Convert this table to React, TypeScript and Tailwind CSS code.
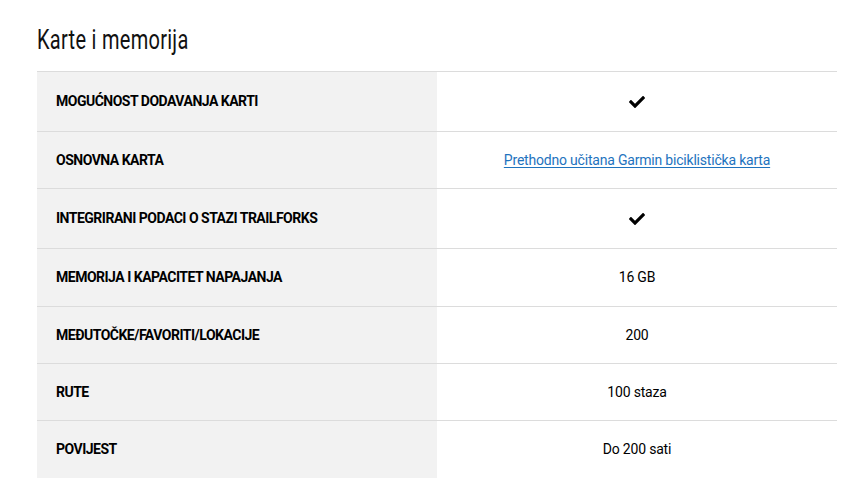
import { FaCheck } from 'react-icons/fa'

const rows: { label: string; value: string; kind?: 'check' | 'link'; h: string }[] = [
  { label: 'MOGUĆNOST DODAVANJA KARTI', value: '', kind: 'check', h: 'h-[60px]' },
  { label: 'OSNOVNA KARTA', value: 'Prethodno učitana Garmin biciklistička karta', kind: 'link', h: 'h-[57px]' },
  { label: 'INTEGRIRANI PODACI O STAZI TRAILFORKS', value: '', kind: 'check', h: 'h-[60px]' },
  { label: 'MEMORIJA I KAPACITET NAPAJANJA', value: '16 GB', h: 'h-[58px]' },
  { label: 'MEĐUTOČKE/FAVORITI/LOKACIJE', value: '200', h: 'h-[57px]' },
  { label: 'RUTE', value: '100 staza', h: 'h-[57px]' },
  { label: 'POVIJEST', value: 'Do 200 sati', h: 'h-[57px]' },
]

export default function App() {
  return (
    <div className="min-h-screen bg-white px-[37px] pt-[25px] font-['Roboto',sans-serif] text-black">
      <h2 className="mb-[16px] origin-left scale-x-[0.74] text-[27px] leading-[30px] tracking-[0.4px] text-[#111]">
        Karte i memorija
      </h2>
      <div className="w-[800px] border-t border-[#dcdcdc]">
        {rows.map((r, i) => (
          <div
            key={r.label}
            className={`flex ${r.h} ${i < rows.length - 1 ? 'border-b border-[#dcdcdc]' : ''}`}
          >
            <div className="flex w-[400px] items-center bg-[#f2f2f2] pl-[19px] text-[14px] font-bold tracking-[-0.5px]">
              {r.label}
            </div>
            <div className="flex flex-1 items-center justify-center text-[14px] tracking-[-0.2px]">
              {r.kind === 'check' && <FaCheck className="text-[16px]" />}
              {r.kind === 'link' && (
                <a href="#" className="text-[#1e73be] underline underline-offset-2">
                  {r.value}
                </a>
              )}
              {!r.kind && r.value}
            </div>
          </div>
        ))}
      </div>
    </div>
  )
}
